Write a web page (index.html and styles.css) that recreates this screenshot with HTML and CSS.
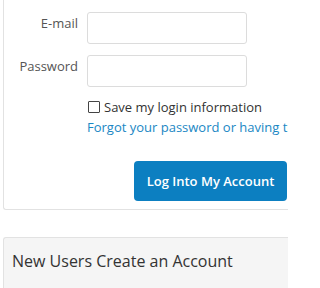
FILE: index.html
```html
<!DOCTYPE html>
<html>
<head>
<meta charset="utf-8">
<link rel="stylesheet" href="styles.css">
</head>
<body>
<div class="page">
  <div class="card login">
    <div class="row">
      <label class="lbl">E-mail</label>
      <input class="field" type="text">
    </div>
    <div class="row">
      <label class="lbl">Password</label>
      <input class="field" type="password">
    </div>
    <div class="opts">
      <label class="remember"><span class="box"></span>Save my login information</label>
      <a class="forgot" href="#">Forgot your password or having trouble logging in?</a>
    </div>
    <div class="actions">
      <button class="btn">Log Into My Account</button>
    </div>
  </div>
  <div class="card newusers">
    <div class="head">New Users Create an Account</div>
  </div>
</div>
</body>
</html>
```
FILE: styles.css
```css
html, body { margin: 0; padding: 0; background: #fff; width: 288px; height: 288px; overflow: hidden; }
body { font-family: "Open Sans", "Liberation Sans", sans-serif; font-size: 13px; color: #333; }
.page { padding-left: 3px; width: 288px; height: 288px; box-sizing: border-box; overflow: hidden; }
.card { border: 1px solid #e2e2e2; border-radius: 3px; }
.login { margin-top: -10px; padding-top: 21px; padding-bottom: 8px; border-right: none; border-top-right-radius: 0; border-bottom-right-radius: 0; }
.row { display: flex; align-items: flex-start; margin-bottom: 11px; }
.lbl { width: 74px; text-align: right; color: #555; padding-top: 2px; line-height: 18px; }
.field { margin-left: 9px; width: 160px; height: 32px; box-sizing: border-box; border: 1px solid #dcdcdc; border-radius: 3px; padding: 0 8px; font: inherit; }
.opts { margin-left: 83px; margin-top: -1px; white-space: nowrap; overflow: hidden; }
.remember { display: flex; align-items: center; line-height: 20px; color: #333; }
.box { width: 10px; height: 10px; border: 1px solid #444; border-radius: 1px; margin: 0 4px 0 1px; }
.forgot { display: block; color: #1a87c4; text-decoration: none; line-height: 20px; }
.actions { display: flex; justify-content: flex-end; margin-top: 24px; }
.btn { width: 153px; height: 40px; margin-right: 1px; background: #0c7fc1; color: #fff; border: none; border-radius: 4px; font-family: "Open Sans", "Liberation Sans", sans-serif; font-size: 13px; font-weight: 600; }
.newusers { margin-top: 27px; background: #f5f5f5; border-right: none; border-top-right-radius: 0; }
.head { padding: 13px 8px 20px 8px; font-size: 16px; color: #333; line-height: 20px; white-space: nowrap; }
```
